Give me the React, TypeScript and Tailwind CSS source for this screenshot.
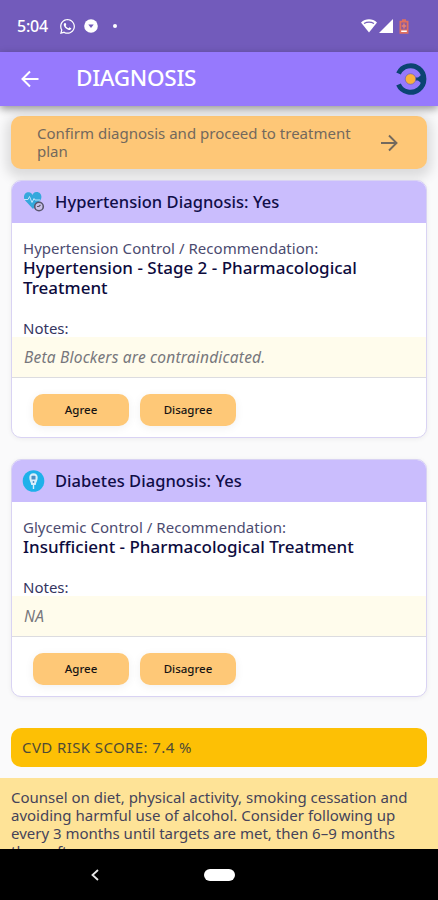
import type { ReactNode } from "react";
import { FaWhatsapp } from "react-icons/fa";

interface Diagnosis {
  id: string;
  icon: ReactNode;
  title: string;
  label: string;
  result: string;
  notes: string;
}

const HeartIcon = () => (
  <svg viewBox="0 0 24 24" className="h-6 w-6">
    <path d="M11 19 3.4 10.8C-.4 6 4 .8 8 2.6c1.400.6 2 1.500 2.400 2.300C11 3.600 12.200 2.200 14.200 2c4.600-.4 6.800 4.800 4 8.600z" fill="#35a8dc" />
    <path d="M2 9.500h4l1.500-3 2.500 6 2-4 1 1.500h5" fill="none" stroke="#bfe3fb" strokeWidth="1" />
    <circle cx="17" cy="16.500" r="4.300" fill="#c9c0e6" stroke="#59566d" strokeWidth="1.600" />
    <path d="M15 16.500h1.800l1.700-1.500" fill="none" stroke="#59566d" strokeWidth="1.200" />
  </svg>
);

const GlucoseIcon = () => (
  <svg viewBox="0 0 24 24" className="h-6 w-6">
    <circle cx="11.500" cy="12" r="10.800" fill="#1eb1ea" />
    <path d="M11.500 4.200c2.800 0 4.200 1.800 4.200 4.400 0 2.800-1.400 4.400-2 7.400h-4.400c-.6-3-2-4.600-2-7.400 0-2.600 1.400-4.400 4.200-4.400z" fill="#d8eefb" />
    <rect x="9.500" y="6.800" width="4" height="3.800" rx=".6" fill="#4b8fc4" />
    <circle cx="11.500" cy="13" r=".9" fill="#4b8fc4" />
    <path d="M11.500 16v4" stroke="#d8eefb" strokeWidth="1.400" />
  </svg>
);

const diagnoses: Diagnosis[] = [
  {
    id: "hypertension",
    icon: <HeartIcon />,
    title: "Hypertension Diagnosis: Yes",
    label: "Hypertension Control / Recommendation:",
    result: "Hypertension - Stage 2 - Pharmacological Treatment",
    notes: "Beta Blockers are contraindicated.",
  },
  {
    id: "diabetes",
    icon: <GlucoseIcon />,
    title: "Diabetes Diagnosis: Yes",
    label: "Glycemic Control / Recommendation:",
    result: "Insufficient - Pharmacological Treatment",
    notes: "NA",
  },
];

function StatusBar() {
  return (
    <div className="flex h-[52px] shrink-0 items-center bg-[#725bbb] pr-[27px] pl-[17px] text-white">
      <span className="w-[42px] text-[16px] font-medium tracking-[-0.2px]">5:04</span>
      <FaWhatsapp className="h-[17px] w-[17px]" />
      <svg viewBox="0 0 14 14" className="ml-2 h-3.5 w-3.5">
        <circle cx="7" cy="7" r="6.800" fill="#fff" />
        <path d="M4.300 5.600h5.400L7 9z" fill="#725bbb" />
      </svg>
      <span className="ml-[15px] h-1 w-1 rounded-full bg-white" />
      <svg viewBox="0 0 16 14" className="ml-auto h-3.5 w-4">
        <path d="M0 3.500C4.500-.8 11.500-.8 16 3.500L8 13.500z" fill="#fff" />
        <path d="M3 4.500q5-2.800 10 0" fill="none" stroke="#725bbb" strokeWidth="1.100" />
      </svg>
      <svg viewBox="0 0 14 14" className="ml-[2px] h-3.5 w-3.5">
        <path d="M14 0v14H0z" fill="#fff" />
      </svg>
      <svg viewBox="0 0 10 15" className="mr-[2px] ml-[6px] h-[15px] w-2.5">
        <path d="M3 .3h4v1.500h2.500v12.900H.5V1.800H3z" fill="#e0705f" />
        <path d="M2.200 3.500h5.600v7H2.200z" fill="#8d5b9a" />
        <path d="M5 4.500v5M2.800 7h4.400" stroke="#e88272" strokeWidth="1.400" />
        <path d="M2.200 11.500h5.600v1.500H2.200z" fill="#fff" />
      </svg>
    </div>
  );
}

function Header() {
  return (
    <header className="relative z-10 flex h-[54px] shrink-0 items-center bg-[#9679fd] pr-[11px] pl-[21px] text-white shadow-[0_3px_8px_rgba(0,0,0,0.4)]">
      <svg viewBox="0 0 18 18" className="h-[18px] w-[18px]">
        <path d="M17.500 9H2M9 1.500 1.500 9 9 16.500" fill="none" stroke="#fff" strokeWidth="2" />
      </svg>
      <h1 className="ml-[37px] pb-[2px] text-[22.5px] font-[550] tracking-[-0.3px]">DIAGNOSIS</h1>
      <svg viewBox="0 0 32 32" className="ml-auto h-8 w-8">
        <path d="M3.500 10.500A13.300 13.300 0 1 1 3.500 21.500" fill="none" stroke="#0b4472" strokeWidth="5" />
        <path d="M20 14.500h3l5-4v11l-5-4h-3z" fill="#0b4472" />
        <circle cx="15.500" cy="16" r="5.300" fill="#f9b13c" stroke="#6d61ad" strokeWidth=".7" />
      </svg>
    </header>
  );
}

function DiagnosisCard({ icon, title, label, result, notes }: Diagnosis) {
  return (
    <section className="overflow-hidden rounded-[10px] border border-[#d9d3f3] bg-white shadow-[0_1px_5px_rgba(0,0,0,0.06)]">
      <div className="flex h-[42px] items-center gap-[9px] bg-[#cabdfd] px-[10px]">
        {icon}
        <h2 className="text-[16.5px] font-medium tracking-[0.04px] text-[#100d48]">{title}</h2>
      </div>
      <div className="px-[11px] pt-[15px]">
        <p className="text-[15px] leading-5 tracking-[0.04px] text-[#4b4b70]">{label}</p>
        <p className="text-[17px] leading-5 font-medium text-[#0d0b3d]">{result}</p>
        <p className="mt-5 h-[19px] text-[15px] leading-5 text-[#35355f]">Notes:</p>
      </div>
      <p className="h-[41px] border-b border-[#dcdce0] bg-[#fffcec] px-3 text-[15.5px] leading-[40px] tracking-[0.2px] text-[#77777c] italic">{notes}</p>
      <div className="flex gap-[11px] px-[21px] pt-4 pb-[11px]">
        <button className="h-8 w-24 rounded-[10px] bg-[#fec877] text-[11.5px] font-medium text-[#161414] shadow-[0_2px_10px_rgba(0,0,0,0.06)]">Agree</button>
        <button className="h-8 w-24 rounded-[10px] bg-[#fec877] text-[11.5px] font-medium text-[#161414] shadow-[0_2px_10px_rgba(0,0,0,0.06)]">Disagree</button>
      </div>
    </section>
  );
}

export default function App() {
  return (
    <div className="flex h-[900px] w-[438px] flex-col overflow-hidden bg-[#fafafb] font-['Noto_Sans',sans-serif]">
      <StatusBar />
      <Header />
      <main className="min-h-0 flex-1 overflow-hidden">
        <div className="px-[11px] pt-[10px]">
          <button className="flex h-[53px] w-full items-center justify-between rounded-[10px] bg-[#fec777] pr-[29px] pl-[26px] text-left text-[#73695d] shadow-[0_4px_12px_5px_rgba(0,0,0,0.12)]">
            <span className="w-[325px] pb-[2px] text-[15px] leading-[18px]">Confirm diagnosis and proceed to treatment plan</span>
            <svg viewBox="0 0 18 18" className="h-[18px] w-[18px]">
              <path d="M1 9h15M9 1.500 16.500 9 9 16.500" fill="none" stroke="#73695d" strokeWidth="1.900" />
            </svg>
          </button>
          <div className="relative mt-[11px] flex flex-col gap-[21px]">
            {diagnoses.map((item) => (
              <DiagnosisCard key={item.id} {...item} />
            ))}
          </div>
          <div className="mt-[31px] flex h-[39px] items-center rounded-[10px] bg-[#fdc005] px-[11px] pb-px text-[15px] tracking-[0.4px] text-[#4f4b35]">
            CVD RISK SCORE: 7.4 %
          </div>
        </div>
        <p className="mt-[11px] h-[110px] bg-[#fee397] px-[11px] pt-[10px] text-[15px] leading-[18px] text-[#45435a]">
          Counsel on diet, physical activity, smoking cessation and
          <br />
          avoiding harmful use of alcohol. Consider following up
          <br />
          every 3 months until targets are met, then 6–9 months
          <br />
          thereafter.
        </p>
      </main>
      <nav className="grid h-[51px] shrink-0 grid-cols-[190px_58px_190px] items-center justify-items-center bg-black">
        <svg viewBox="0 0 8 12" className="h-3 w-2">
          <path d="M7 1 1.500 6 7 11" fill="none" stroke="#e8e8e8" strokeWidth="1.800" />
        </svg>
        <span className="h-3 w-[31px] rounded-full bg-white" />
      </nav>
    </div>
  );
}
